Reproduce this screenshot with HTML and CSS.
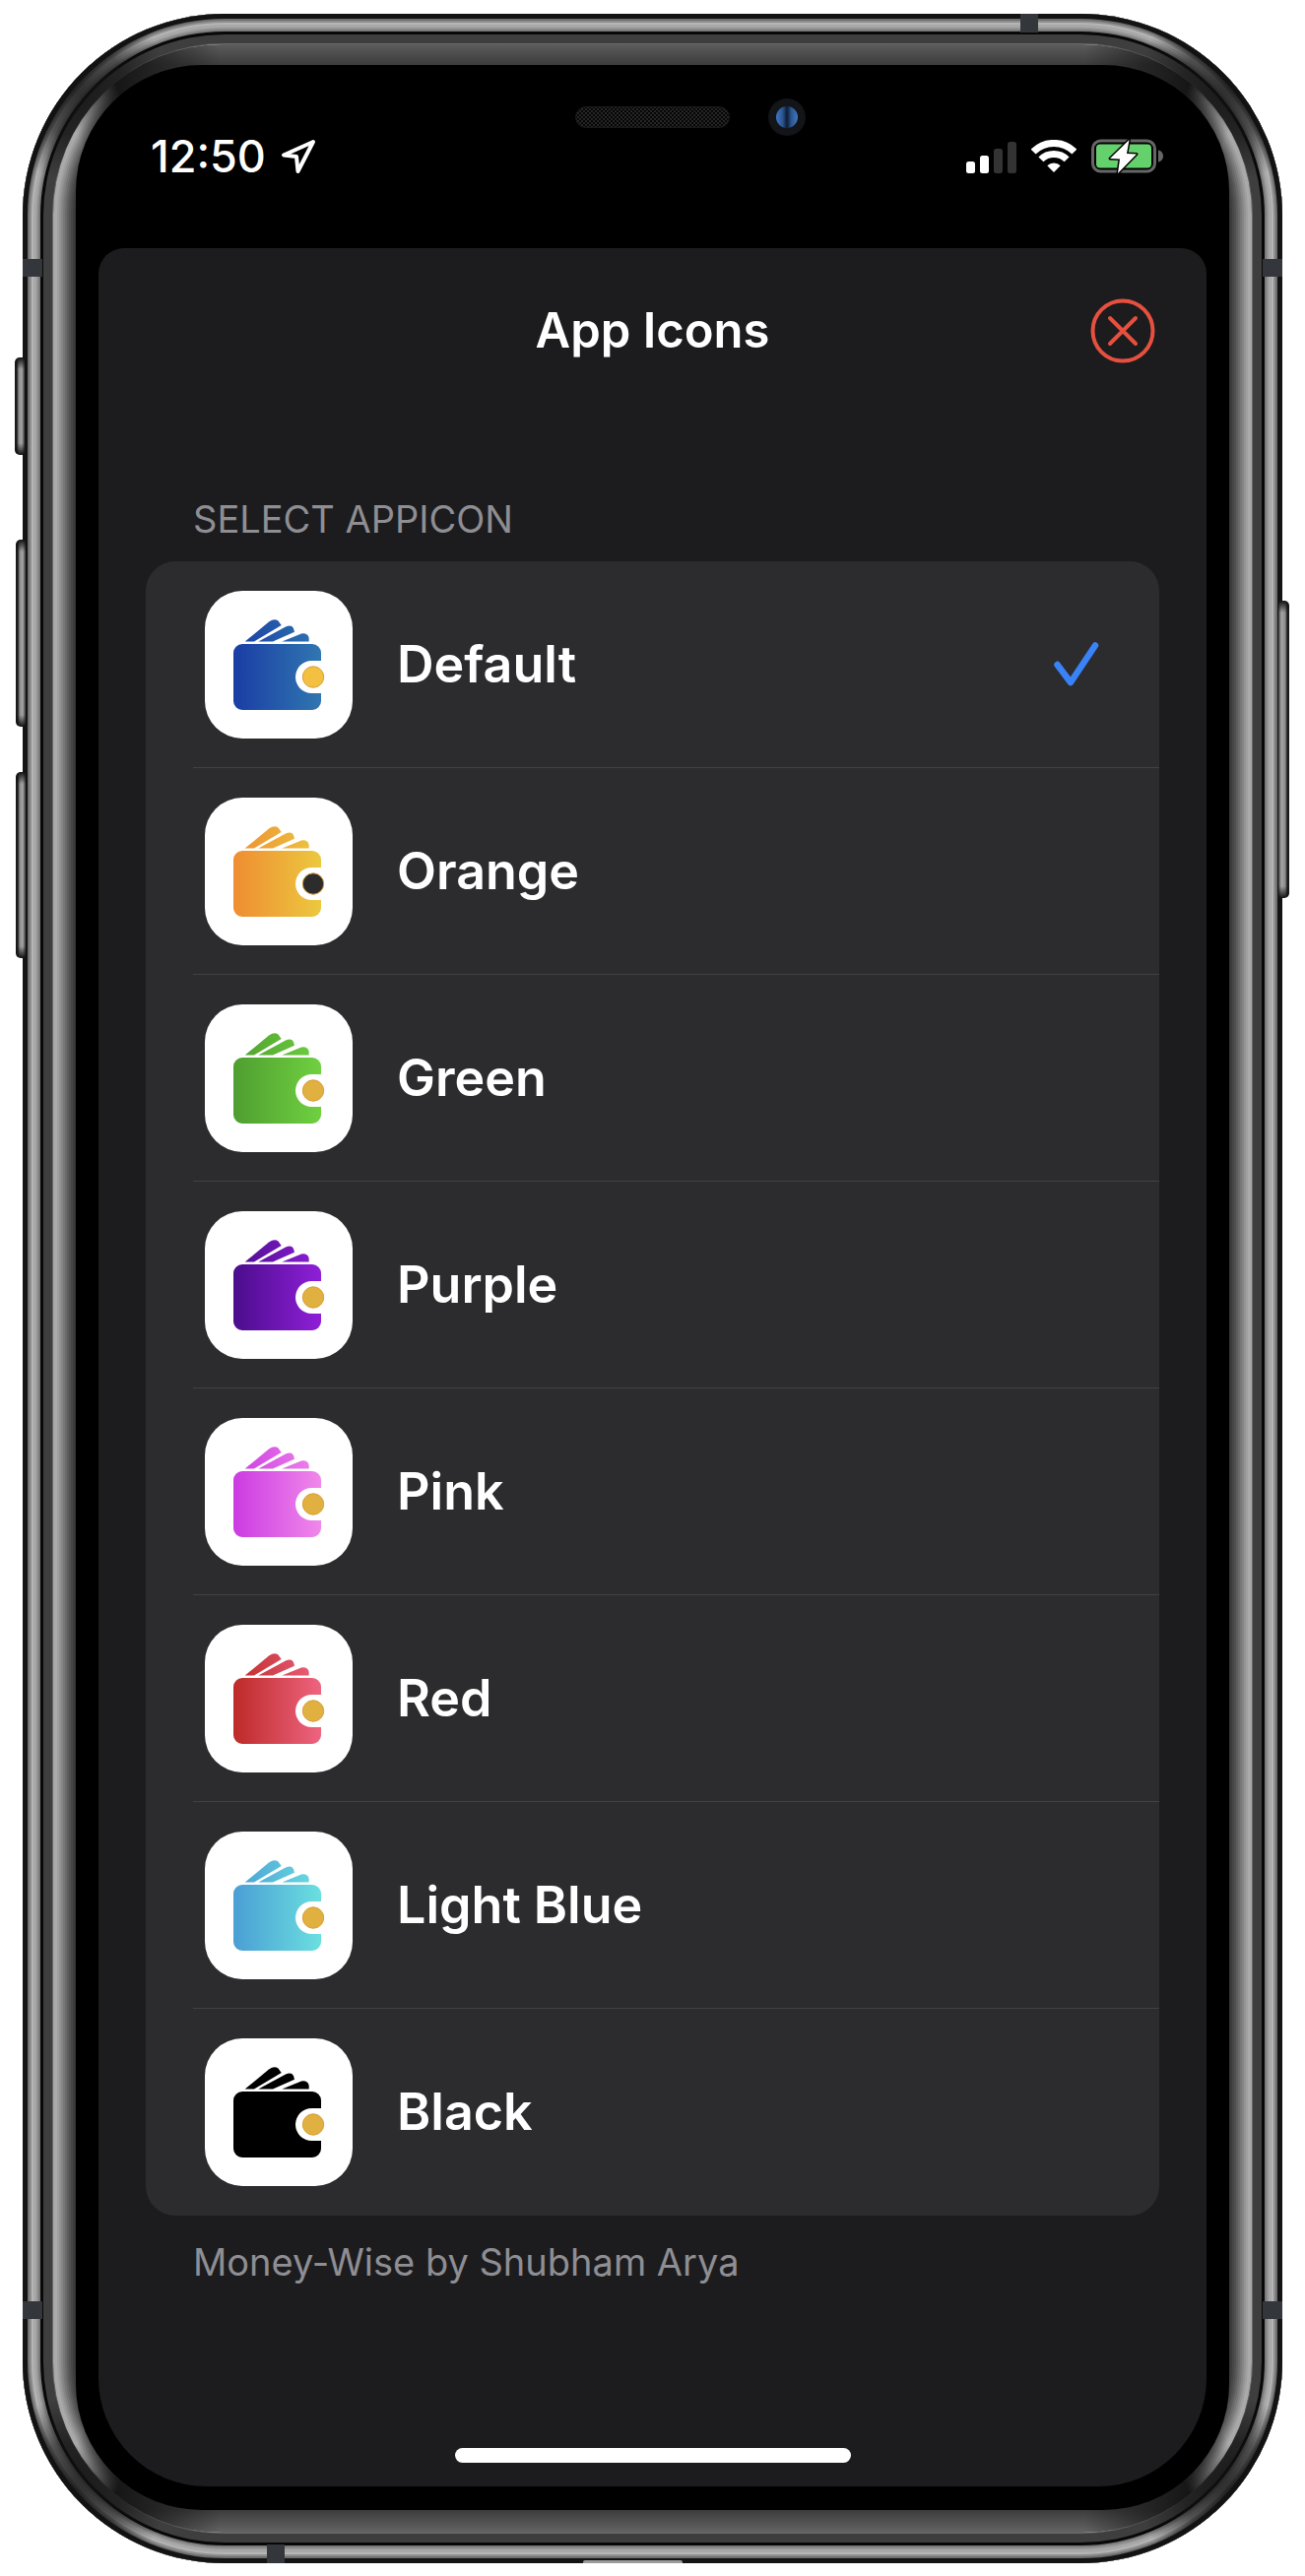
FILE: index.html
```html
<!DOCTYPE html>
<html lang="en">
<head>
<meta charset="utf-8">
<title>App Icons</title>
<link rel="stylesheet" href="styles.css">
</head>
<body>
<svg class="defs" aria-hidden="true">
  <defs>
    <linearGradient id="g-blue" gradientUnits="userSpaceOnUse" x1="29" y1="0" x2="118" y2="0"><stop offset="0" stop-color="#1a3da5"/><stop offset="1" stop-color="#3076b0"/></linearGradient>
    <linearGradient id="g-orange" gradientUnits="userSpaceOnUse" x1="29" y1="0" x2="118" y2="0"><stop offset="0" stop-color="#ef8d32"/><stop offset="1" stop-color="#ecc83f"/></linearGradient>
    <linearGradient id="g-green" gradientUnits="userSpaceOnUse" x1="29" y1="0" x2="118" y2="0"><stop offset="0" stop-color="#4f9e30"/><stop offset="1" stop-color="#6fd040"/></linearGradient>
    <linearGradient id="g-purple" gradientUnits="userSpaceOnUse" x1="29" y1="0" x2="118" y2="0"><stop offset="0" stop-color="#4a0d8c"/><stop offset="1" stop-color="#8f1fd8"/></linearGradient>
    <linearGradient id="g-pink" gradientUnits="userSpaceOnUse" x1="29" y1="0" x2="118" y2="0"><stop offset="0" stop-color="#cb3be2"/><stop offset="1" stop-color="#f088ea"/></linearGradient>
    <linearGradient id="g-red" gradientUnits="userSpaceOnUse" x1="29" y1="0" x2="118" y2="0"><stop offset="0" stop-color="#bd2a28"/><stop offset="1" stop-color="#ee6480"/></linearGradient>
    <linearGradient id="g-sky" gradientUnits="userSpaceOnUse" x1="29" y1="0" x2="118" y2="0"><stop offset="0" stop-color="#4a9ed4"/><stop offset="1" stop-color="#6bdfe0"/></linearGradient>
    <symbol id="wallet" viewBox="0 0 150 150">
      <path d="M40.7 51.500 L65 31.500 Q70.500 27.500 74.500 30.500 L77.700 35 L50 51.500Z"/>
      <path d="M54.300 51.500 L82 36.500 Q88 34 90 38 L91 41.700 L69 51.500Z"/>
      <path d="M78.300 51.500 L98 43.500 Q104.500 42.500 105.700 48 V51.500Z"/>
      <path d="M38 54H109a9 9 0 0 1 9 9V71H108.500a16.500 16.500 0 0 0 0 33H118V112a9 9 0 0 1-9 9H38a9 9 0 0 1-9-9V63a9 9 0 0 1 9-9Z"/>
      <circle class="coin" cx="110" cy="87.500" r="10.700"/>
    </symbol>
  </defs>
</svg>
<main class="stage">
  <div class="device">
    <span class="button button-silent"></span>
    <span class="button button-up"></span>
    <span class="button button-down"></span>
    <span class="button button-power"></span>
    <span class="antenna antenna-top"></span>
    <span class="antenna antenna-left-a"></span>
    <span class="antenna antenna-right-a"></span>
    <span class="antenna antenna-left-b"></span>
    <span class="antenna antenna-right-b"></span>
    <span class="antenna antenna-bottom"></span>
    <span class="lip"></span>
    <div class="bezel">
      <div class="screen">
        <div class="notch">
          <span class="speaker"></span>
          <span class="camera"><span class="lens"></span></span>
        </div>
        <header class="status">
          <div class="status-left">
            <span class="time">12:50</span>
            <svg class="arrow" viewBox="0 0 36 36"><path d="M33 3 L3 16.500 L16 18 L17.500 33Z"/></svg>
          </div>
          <div class="status-right">
            <div class="signal">
              <span class="bar bar-1"></span>
              <span class="bar bar-2"></span>
              <span class="bar bar-3"></span>
              <span class="bar bar-4"></span>
            </div>
            <svg class="wifi" viewBox="0 0 46 34">
              <path class="wifi-arc" d="M2.100 12.100A29.500 29.500 0 0 1 43.900 12.100"/>
              <path class="wifi-arc" d="M9.900 19.900A18.500 18.500 0 0 1 36.100 19.900"/>
              <path class="wifi-dot" d="M23 33L16.300 26.300A9.500 9.500 0 0 1 29.700 26.300Z"/>
            </svg>
            <svg class="battery" viewBox="0 0 74 36">
              <rect class="batt-case" x="1.500" y="2" width="63" height="31" rx="8"/>
              <rect class="batt-fill" x="5" y="5.500" width="56" height="24" rx="4"/>
              <path class="batt-cap" d="M68 11.500c3 .5 5 3 5 6s-2 5.500-5 6Z"/>
              <path class="batt-bolt" d="M38.500 1 L19 20 L29 20.500 L27 35 L46 15.500 L36 15Z"/>
            </svg>
          </div>
        </header>
        <section class="sheet">
          <div class="sheet-head">
            <span></span>
            <h1 class="title">App Icons</h1>
            <svg class="close" viewBox="0 0 66 66">
              <circle cx="33" cy="33" r="30.500"/>
              <path d="M20 20L46 46M46 20L20 46"/>
            </svg>
          </div>
          <h2 class="caption">SELECT APPICON</h2>
          <ul class="list">
            <li class="row">
              <span class="tile"><svg class="wallet wallet-blue"><use href="#wallet"/></svg></span>
              <span class="name">Default</span>
              <svg class="check" viewBox="0 0 46 46"><path d="M3.500 23L17 41L42 3.500"/></svg>
            </li>
            <li class="row">
              <span class="tile"><svg class="wallet wallet-orange"><use href="#wallet"/></svg></span>
              <span class="name">Orange</span>
            </li>
            <li class="row">
              <span class="tile"><svg class="wallet wallet-green"><use href="#wallet"/></svg></span>
              <span class="name">Green</span>
            </li>
            <li class="row">
              <span class="tile"><svg class="wallet wallet-purple"><use href="#wallet"/></svg></span>
              <span class="name">Purple</span>
            </li>
            <li class="row">
              <span class="tile"><svg class="wallet wallet-pink"><use href="#wallet"/></svg></span>
              <span class="name">Pink</span>
            </li>
            <li class="row">
              <span class="tile"><svg class="wallet wallet-red"><use href="#wallet"/></svg></span>
              <span class="name">Red</span>
            </li>
            <li class="row">
              <span class="tile"><svg class="wallet wallet-sky"><use href="#wallet"/></svg></span>
              <span class="name">Light Blue</span>
            </li>
            <li class="row">
              <span class="tile"><svg class="wallet wallet-black"><use href="#wallet"/></svg></span>
              <span class="name">Black</span>
            </li>
          </ul>
          <p class="footer">Money-Wise by Shubham Arya</p>
          <span class="home"></span>
        </section>
      </div>
    </div>
  </div>
</main>
</body>
</html>
```

FILE: styles.css
```css
* { box-sizing: border-box; }

html, body {
  margin: 0;
  padding: 0;
  background: #fff;
  font-family: "Inter", "Liberation Sans", sans-serif;
}

.defs {
  position: absolute;
  width: 0;
  height: 0;
}

.stage {
  height: 2616px;
  padding: 14px 0 0 23px;
  overflow: hidden;
}

/* Device body: concentric metal bands */
.device {
  position: relative;
  width: 1279px;
  height: 2589px;
  padding: 31px;
  border-radius: 205px;
  box-shadow:
    inset 0 0 0 5px #131313,
    inset 0 0 0 7px #6f6f6f,
    inset 0 0 0 9px #8f8f8f,
    inset 0 0 0 11px #b5b5b5,
    inset 0 0 0 14px #a8a8a8,
    inset 0 0 0 16px #949494,
    inset 0 0 0 18px #7a7a7a,
    inset 0 0 0 21px #080808,
    inset 0 0 0 30px #3e3e3e,
    inset 0 0 0 31px #6a6a6a;
}

.device::before {
  content: "";
  position: absolute;
  inset: 0;
  border-radius: inherit;
  background:
    radial-gradient(circle at 50px 72px, rgba(18,18,18,.85) 0, rgba(18,18,18,.6) 50px, rgba(18,18,18,0) 95px),
    radial-gradient(circle at calc(100% - 50px) 72px, rgba(18,18,18,.85) 0, rgba(18,18,18,.6) 50px, rgba(18,18,18,0) 95px),
    radial-gradient(circle at 50px calc(100% - 72px), rgba(18,18,18,.85) 0, rgba(18,18,18,.6) 50px, rgba(18,18,18,0) 95px),
    radial-gradient(circle at calc(100% - 50px) calc(100% - 72px), rgba(18,18,18,.85) 0, rgba(18,18,18,.6) 50px, rgba(18,18,18,0) 95px);
}

.bezel {
  position: relative;
  z-index: 1;
  height: 100%;
  padding: 21px 23px 23px;
  border-radius: 172px;
  background:
    linear-gradient(90deg, #141414 60px, rgba(20,20,20,0) 170px, rgba(20,20,20,0) calc(100% - 170px), #141414 calc(100% - 60px)),
    linear-gradient(180deg, #5c5c5c 0, #3c3c3c 21px, #3c3c3c calc(100% - 23px), #646464 100%);
}

.bezel::before {
  content: "";
  position: absolute;
  inset: 0;
  border-radius: inherit;
  box-shadow:
    inset 0 0 0 2px #a8a8a8,
    inset 0 0 0 4px #aaaaaa,
    inset 0 0 0 6px #a0a0a0,
    inset 0 0 0 8px #939393,
    inset 0 0 0 10px #858585,
    inset 0 0 0 12px #777777,
    inset 0 0 0 14px #6a6a6a,
    inset 0 0 0 16px #5c5c5c,
    inset 0 0 0 18px #505050,
    inset 0 0 0 20px #464646,
    inset 0 0 0 22px #3c3c3c,
    inset 0 0 0 23px #333333;
  -webkit-mask-image: conic-gradient(transparent 0 24deg, #000 26.500deg 153.500deg, transparent 156deg 204deg, #000 206.500deg 333.500deg, transparent 336deg);
  mask-image: conic-gradient(transparent 0 24deg, #000 26.500deg 153.500deg, transparent 156deg 204deg, #000 206.500deg 333.500deg, transparent 336deg);
}

/* Side buttons and antenna breaks */
.button {
  position: absolute;
  width: 10px;
  border-radius: 5px 0 0 5px;
  background:
    linear-gradient(180deg, #111 0, rgba(17,17,17,0) 12px, rgba(17,17,17,0) calc(100% - 12px), #111 100%),
    linear-gradient(90deg, #1a1a1a 0, #1a1a1a 2px, #8a8a8a 4px, #a6a6a6 7px, #3a3a3a 10px);
}

.button-silent { left: -8px; top: 349px; height: 99px; }
.button-up { left: -7px; top: 534px; height: 190px; }
.button-down { left: -7px; top: 770px; height: 189px; }

.button-power {
  left: 1275px;
  top: 596px;
  width: 11px;
  height: 302px;
  border-radius: 0 5px 5px 0;
  background:
    linear-gradient(180deg, #111 0, rgba(17,17,17,0) 12px, rgba(17,17,17,0) calc(100% - 12px), #111 100%),
    linear-gradient(90deg, #3a3a3a 0, #a6a6a6 3px, #8a8a8a 7px, #1a1a1a 9px);
}

.antenna {
  position: absolute;
  z-index: 2;
  background: #33363a;
}

.antenna-top { left: 1013px; top: 0; width: 18px; height: 19px; }
.antenna-left-a { left: 0; top: 249px; width: 20px; height: 18px; }
.antenna-right-a { right: 0; top: 249px; width: 20px; height: 18px; }
.antenna-left-b { left: 0; top: 2323px; width: 20px; height: 18px; }
.antenna-right-b { right: 0; top: 2323px; width: 20px; height: 18px; }
.antenna-bottom { left: 248px; bottom: 0; width: 18px; height: 19px; }

.lip {
  position: absolute;
  z-index: 2;
  left: 569px;
  bottom: 0;
  width: 101px;
  height: 3px;
  border-radius: 2px 2px 0 0;
  background: #9a9a9a;
}

/* Screen */
.screen {
  position: relative;
  z-index: 1;
  display: flex;
  flex-direction: column;
  height: 100%;
  border-radius: 128px;
  background: #000;
}

.notch {
  position: absolute;
  left: 507px;
  top: 34px;
  display: flex;
  align-items: center;
  gap: 39px;
  height: 38px;
}

.speaker {
  width: 157px;
  height: 22px;
  border-radius: 11px;
  border: 1px solid #1a1a1a;
  background:
    radial-gradient(circle, #262626 .8px, transparent 1.2px) 0 0 / 4px 4px,
    radial-gradient(circle, #262626 .8px, transparent 1.2px) 2px 2px / 4px 4px,
    #050505;
}

.camera {
  display: flex;
  align-items: center;
  justify-content: center;
  width: 38px;
  height: 38px;
  border-radius: 50%;
  background: radial-gradient(circle, #101318 0, #141519 60%, #0d0d10 100%);
}

.lens {
  width: 22px;
  height: 22px;
  border-radius: 50%;
  background: linear-gradient(90deg, #3f78c4 0, #2c5590 30%, #0d1b33 50%, #2c5590 70%, #3f78c4 100%);
}

.status {
  display: flex;
  justify-content: space-between;
  flex: none;
  height: 186px;
  padding: 76px 66px 0 76px;
  color: #fff;
}

.status-left,
.status-right {
  display: flex;
  align-items: center;
  height: 34px;
}

.status-left { gap: 15px; }

.time {
  font-size: 45px;
  font-weight: 500;
  line-height: 34px;
}

.arrow {
  width: 36px;
  height: 36px;
  fill: none;
  stroke: #fff;
  stroke-width: 4;
  stroke-linejoin: round;
}

.status-right { gap: 15px; }

.signal {
  display: flex;
  align-items: flex-end;
  gap: 5px;
  height: 33px;
}

.bar {
  width: 9px;
  border-radius: 2.500px;
  background: #fff;
}

.bar-1 { height: 12px; }
.bar-2 { height: 18px; }
.bar-3 { height: 25px; background: #333; }
.bar-4 { height: 32px; background: #333; }

.wifi { width: 46px; height: 34px; }
.wifi-arc { fill: none; stroke: #fff; stroke-width: 7; }
.wifi-dot { fill: #fff; }

.battery {
  width: 74px;
  height: 36px;
  overflow: visible;
}

.batt-case { fill: none; stroke: #666; stroke-width: 3; }
.batt-fill { fill: #65d16c; }
.batt-cap { fill: #666; }
.batt-bolt {
  fill: #fff;
  stroke: #000;
  stroke-width: 3;
  stroke-linejoin: round;
  paint-order: stroke;
}

/* Sheet */
.sheet {
  display: flex;
  flex-direction: column;
  flex: 1;
  margin: 0 23px 24px;
  border-radius: 26px 26px 110px 110px;
  background: #1c1c1e;
}

.sheet-head {
  display: grid;
  grid-template-columns: 1fr auto 1fr;
  align-items: center;
  height: 168px;
  padding-right: 52px;
  padding-left: 52px;
}

.title {
  margin: 0;
  color: #fff;
  font-size: 49px;
  font-weight: 600;
  line-height: 60px;
}

.close {
  justify-self: end;
  width: 66px;
  height: 66px;
  fill: none;
  stroke: #e5503f;
  stroke-width: 4;
  stroke-linecap: round;
}

.caption {
  margin: 82px 0 18px 96px;
  color: #8e8e93;
  font-size: 38px;
  font-weight: 400;
  line-height: 50px;
}

.list {
  margin: 0 48px;
  padding: 0;
  list-style: none;
  border-radius: 30px;
  background: #2c2c2e;
}

.row {
  display: flex;
  align-items: center;
  height: 210px;
  padding: 0 61px 0 60px;
  background: linear-gradient(#414144, #414144) right bottom / calc(100% - 48px) 1px no-repeat;
}

.row:last-child { background: none; }

.tile {
  display: block;
  flex: none;
  width: 150px;
  height: 150px;
  border-radius: 38px;
  background: #fff;
}

.wallet {
  display: block;
  width: 150px;
  height: 150px;
  color: #e0b040;
}

.coin {
  fill: currentColor;
  stroke: #d99f36;
  stroke-width: 1;
}

.wallet-blue { fill: url(#g-blue); color: #f3c041; }
.wallet-orange { fill: url(#g-orange); color: #2c2c2c; }
.wallet-green { fill: url(#g-green); }
.wallet-purple { fill: url(#g-purple); }
.wallet-pink { fill: url(#g-pink); }
.wallet-red { fill: url(#g-red); }
.wallet-sky { fill: url(#g-sky); }
.wallet-black { fill: #000; }

.name {
  flex: 1;
  margin-left: 45px;
  color: #fff;
  font-size: 52px;
  font-weight: 600;
  line-height: 64px;
}

.check {
  width: 46px;
  height: 46px;
  fill: none;
  stroke: #3a82f7;
  stroke-width: 6.500;
  stroke-linecap: round;
  stroke-linejoin: round;
}

.footer {
  margin: 22px 0 0 96px;
  color: #8e8e93;
  font-size: 38px;
  line-height: 50px;
}

.home {
  align-self: center;
  width: 402px;
  height: 15px;
  margin-top: auto;
  margin-bottom: 24px;
  border-radius: 8px;
  background: #fff;
}
```
